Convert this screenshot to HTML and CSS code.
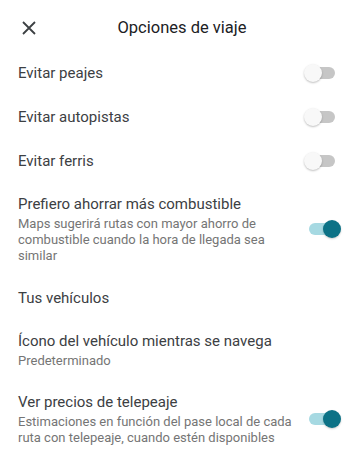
FILE: index.html
```html
<!DOCTYPE html>
<html lang="es">
<head>
<meta charset="utf-8">
<link rel="stylesheet" href="styles.css">
</head>
<body>
<div class="app">
  <header class="header">
    <span class="close">
      <svg width="14" height="14" viewBox="0 0 14 14"><path d="M1 1L13 13M13 1L1 13" stroke="#3c4043" stroke-width="1.8" fill="none"/></svg>
    </span>
    <h1 class="title">Opciones de viaje</h1>
  </header>
  <div class="row single">
    <span class="label">Evitar peajes</span>
    <span class="switch"><span class="track"></span><span class="thumb"></span></span>
  </div>
  <div class="row single">
    <span class="label">Evitar autopistas</span>
    <span class="switch"><span class="track"></span><span class="thumb"></span></span>
  </div>
  <div class="row single">
    <span class="label">Evitar ferris</span>
    <span class="switch"><span class="track"></span><span class="thumb"></span></span>
  </div>
  <div class="row multi">
    <div class="text">
      <div class="label">Prefiero ahorrar más combustible</div>
      <div class="sub">Maps sugerirá rutas con mayor ahorro de combustible cuando la hora de llegada sea similar</div>
    </div>
    <span class="switch on"><span class="track"></span><span class="thumb"></span></span>
  </div>
  <div class="row single">
    <span class="label">Tus vehículos</span>
  </div>
  <div class="row multi">
    <div class="text">
      <div class="label">Ícono del vehículo mientras se navega</div>
      <div class="sub">Predeterminado</div>
    </div>
  </div>
  <div class="row multi">
    <div class="text">
      <div class="label">Ver precios de telepeaje</div>
      <div class="sub">Estimaciones en función del pase local de cada ruta con telepeaje, cuando estén disponibles</div>
    </div>
    <span class="switch on"><span class="track"></span><span class="thumb"></span></span>
  </div>
</div>
</body>
</html>
```
FILE: styles.css
```css
html, body {
  margin: 0;
  padding: 0;
  background: #ffffff;
}
.app {
  width: 350px;
  font-family: Roboto, "Noto Sans", sans-serif;
  color: #3c4043;
}
.header {
  height: 51px;
  display: flex;
  align-items: center;
  padding-top: 4px;
  box-sizing: border-box;
}
.close {
  width: 14px;
  height: 14px;
  margin-left: 22px;
  display: flex;
}
.title {
  flex: 1;
  margin: 0;
  padding-right: 22px;
  text-align: center;
  font-size: 16.5px;
  font-weight: 400;
  color: #202124;
}
.row {
  display: flex;
  align-items: center;
  padding: 0 8px 0 18px;
}
.row.single {
  height: 44px;
}
.row.multi {
  padding-top: 11px;
  padding-bottom: 12px;
}
.text {
  flex: 1;
  padding-right: 6px;
}
.label {
  flex: 1;
  font-size: 15px;
  line-height: 20px;
  color: #3c4043;
}
.sub {
  margin-top: 2px;
  font-size: 13px;
  line-height: 16px;
  color: #757575;
}
.switch {
  position: relative;
  width: 38px;
  height: 20px;
  flex: none;
}
.track {
  position: absolute;
  left: 5px;
  top: 4px;
  width: 26px;
  height: 12px;
  border-radius: 6px;
  background: #c6c6c6;
}
.thumb {
  position: absolute;
  left: 0;
  top: 1px;
  width: 18px;
  height: 18px;
  border-radius: 50%;
  background: #f8f8f8;
  box-shadow: 0 1px 2px rgba(0,0,0,0.25);
}
.switch.on .track {
  background: #a6d9e2;
}
.switch.on .thumb {
  left: 19px;
  background: #0c7286;
  box-shadow: 0 1px 2px rgba(0,0,0,0.2);
}
```
